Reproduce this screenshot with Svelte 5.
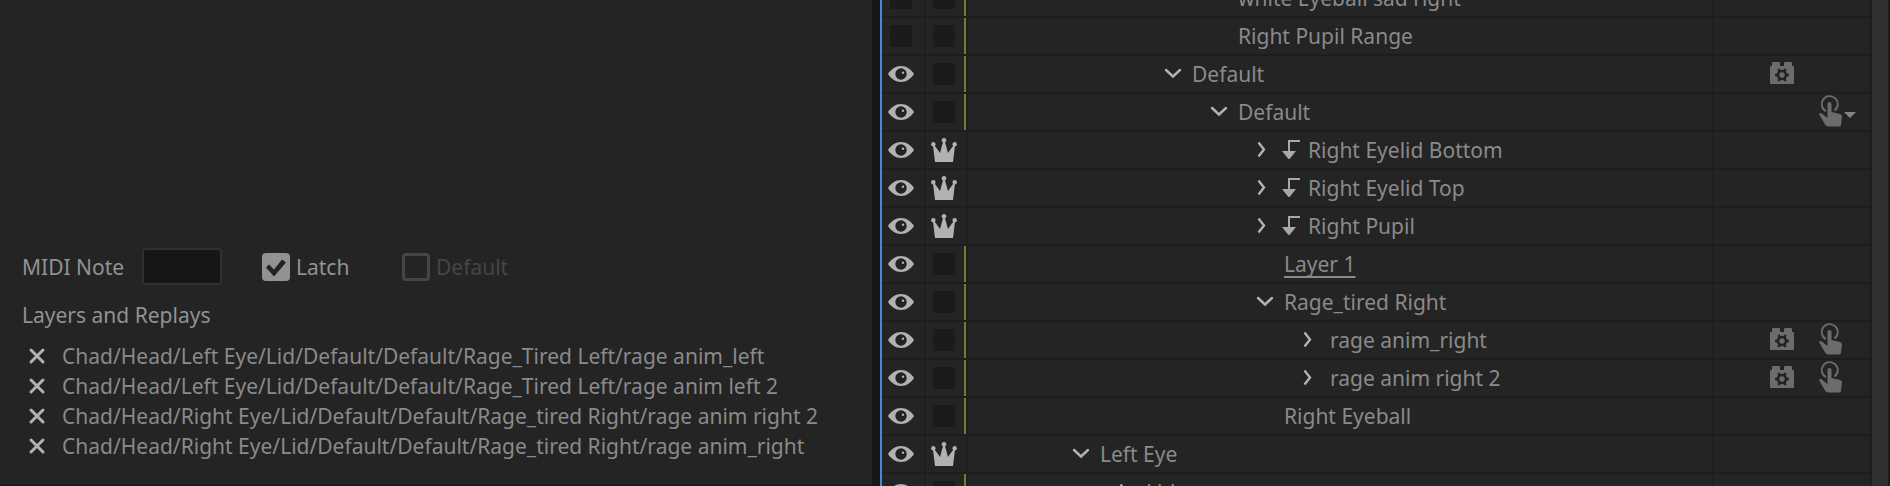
<script lang="ts">
  interface Layer {
    name: string;
    level: number;
    arrow?: 'open' | 'closed';
    hidden?: boolean;
    crown?: boolean;
    attached?: boolean;
    underlined?: boolean;
    behavior?: boolean;
    trigger?: 'single' | 'menu';
  }

  const layers: Layer[] = [
    { name: 'white Eyeball sad right', level: 3, hidden: true },
    { name: 'Right Pupil Range', level: 3, hidden: true },
    { name: 'Default', level: 2, arrow: 'open', behavior: true },
    { name: 'Default', level: 3, arrow: 'open', trigger: 'menu' },
    { name: 'Right Eyelid Bottom', level: 4, arrow: 'closed', crown: true, attached: true },
    { name: 'Right Eyelid Top', level: 4, arrow: 'closed', crown: true, attached: true },
    { name: 'Right Pupil', level: 4, arrow: 'closed', crown: true, attached: true },
    { name: 'Layer 1', level: 4, underlined: true },
    { name: 'Rage_tired Right', level: 4, arrow: 'open' },
    { name: 'rage anim_right', level: 5, arrow: 'closed', behavior: true, trigger: 'single' },
    { name: 'rage anim right 2', level: 5, arrow: 'closed', behavior: true, trigger: 'single' },
    { name: 'Right Eyeball', level: 4 },
    { name: 'Left Eye', level: 0, arrow: 'open', crown: true },
    { name: 'Lid', level: 1, arrow: 'closed' },
  ];

  let replays = $state([
    'Chad/Head/Left Eye/Lid/Default/Default/Rage_Tired Left/rage anim_left',
    'Chad/Head/Left Eye/Lid/Default/Default/Rage_Tired Left/rage anim left 2',
    'Chad/Head/Right Eye/Lid/Default/Default/Rage_tired Right/rage anim right 2',
    'Chad/Head/Right Eye/Lid/Default/Default/Rage_tired Right/rage anim_right',
  ]);

  let midiNote = $state('');
  let latch = $state(true);

  function removeReplay(path: string) {
    replays = replays.filter((r) => r !== path);
  }
</script>

<main class="workspace">
  <section class="triggers">
    <div class="options">
      <label class="midi-label" for="midi">MIDI Note</label>
      <input class="midi" id="midi" type="text" bind:value={midiNote} />
      <label class="check latch">
        <input type="checkbox" bind:checked={latch} />
        <span>Latch</span>
      </label>
      <label class="check disabled">
        <input type="checkbox" disabled />
        <span>Default</span>
      </label>
    </div>

    <h2>Layers and Replays</h2>
    <ul class="replays">
      {#each replays as path (path)}
        <li>
          <button aria-label="Remove" onclick={() => removeReplay(path)}>
            <svg width="16" height="16" viewBox="0 0 16 16">
              <path d="M2 2 14 14M14 2 2 14" fill="none" stroke="currentColor" stroke-width="3" stroke-linecap="round" />
            </svg>
          </button>
          <span>{path}</span>
        </li>
      {/each}
    </ul>
  </section>

  <div class="divider"></div>

  <section class="puppet">
    <ul class="tree">
      {#each layers as layer}
        <li class="row">
          <button class="cell eye" aria-label="Visibility">
            {#if layer.hidden}
              <span class="blank"></span>
            {:else}
              <svg width="26" height="16" viewBox="0 0 26 16">
                <path d="M0 8C3 3.500 7.500 0 13 0s10 3.500 13 8c-3 4.500-7.500 8-13 8S3 12.500 0 8z" fill="currentColor" />
                <circle cx="13" cy="8" r="5.700" fill="#222" />
                <circle cx="15" cy="6.800" r="1.200" fill="currentColor" />
              </svg>
            {/if}
          </button>
          <button class="cell own" class:marked={!layer.crown} aria-label="Independent">
            {#if layer.crown}
              <svg width="26" height="24" viewBox="0 0 26 24" fill="currentColor">
                <path d="M4 24 2 7.500 3.300 7 9 15 12.300 3h1.400L17 15l5.700-8 1.300.5L22 24z" />
                <circle cx="2.300" cy="6.300" r="2.200" />
                <circle cx="13" cy="2.300" r="2.300" />
                <circle cx="23.700" cy="6.300" r="2.200" />
              </svg>
            {:else}
              <span class="blank"></span>
            {/if}
          </button>
          <div class="name" style="--level: {layer.level}">
            <span class="twirl">
              {#if layer.arrow}
                <button aria-label="Expand">
                  <svg width="16" height="16" viewBox="0 0 16 16" fill="none" stroke="currentColor" stroke-width="2.400">
                    {#if layer.arrow === 'open'}
                      <path d="M1 4 8 10.500 15 4" stroke-linecap="round" />
                    {:else}
                      <path d="M1.500 0.500 7 7.500 1.500 14.500" />
                    {/if}
                  </svg>
                </button>
              {/if}
            </span>
            {#if layer.attached}
              <svg class="attach" width="18" height="20" viewBox="0 0 18 20">
                <path d="M18 1H7v12" fill="none" stroke="currentColor" stroke-width="2" />
                <path d="M0 11h14L8 18.500q-1 1-2 0z" fill="currentColor" />
              </svg>
            {/if}
            <span class="label"><span class:underlined={layer.underlined}>{layer.name}</span></span>
          </div>
          <div class="actions">
            <span class="slot">
              {#if layer.behavior}
                <svg width="24" height="22" viewBox="0 0 24 22">
                  <path d="M0 5q0-1 1-1h1V1q0-1 1-1h6q1 0 1 1v3h4V1q0-1 1-1h6q1 0 1 1v3h1q1 0 1 1v16q0 1-1 1H1q-1 0-1-1z" fill="currentColor" />
                  <circle cx="12" cy="13" r="4" fill="none" stroke="#222" stroke-width="2.600" />
                  <path d="M5 13h3M16 13h3M8.500 7l1.500 3M15.500 7 14 10M8.500 19l1.500-3M15.500 19 14 16" stroke="#222" stroke-width="2.600" />
                </svg>
              {/if}
            </span>
            <span class="slot">
              {#if layer.trigger}
                <svg width="24" height="32" viewBox="0 0 24 32">
                  <path d="M7 16.200A8 8 0 1 1 15.500 15.500" fill="none" stroke="currentColor" stroke-width="1.900" />
                  <path d="M8.500 9q0-2 2-2t2 2v8l8.500 2q2 .5 2 2.500l-1 8.500q-.3 1.500-2 1.500H9.500q-2.500 0-3.500-2L.5 20q-1-2 .7-2t2.800 1.500L8.500 23z" fill="currentColor" />
                </svg>
              {/if}
            </span>
            {#if layer.trigger === 'menu'}
              <svg class="caret" width="12" height="6" viewBox="0 0 12 6">
                <path d="M0 0h12L6 6z" fill="currentColor" />
              </svg>
            {/if}
          </div>
        </li>
      {/each}
    </ul>
    <div class="scrollbar"></div>
  </section>
</main>

<style>
  :global(body) {
    background: #242424;
  }

  .workspace {
    display: grid;
    grid-template-columns: 872fr 8px 1010fr;
    grid-template-rows: minmax(0, 1fr);
    height: 100vh;
    overflow: hidden;
    background: #242424;
    color: #8a8a8a;
    font-family: 'Noto Sans', sans-serif;
    font-size: 21px;
    line-height: 30px;
  }

  ul {
    list-style: none;
    margin: 0;
    padding: 0;
  }

  button {
    display: flex;
    align-items: center;
    padding: 0;
    border: 0;
    background: none;
    color: #b2b2b2;
  }

  svg {
    display: block;
    flex: none;
    overflow: visible;
  }

  .triggers {
    display: flex;
    flex-direction: column;
    justify-content: flex-end;
    padding: 0 22px 23px;
    border-bottom: 2px solid #1b1b1b;
    min-width: 0;
    white-space: nowrap;
  }

  .options {
    display: flex;
    align-items: center;
    color: #929292;
  }

  .midi-label {
    width: 120px;
  }

  .midi {
    box-sizing: border-box;
    width: 80px;
    height: 37px;
    padding: 0 8px;
    border: 2px solid #303030;
    border-radius: 4px;
    background: #161616;
    color: inherit;
    font: inherit;
  }

  .check {
    display: flex;
    align-items: center;
    gap: 6px;
    margin-left: 40px;
  }

  .latch {
    width: 100px;
  }

  .check input {
    appearance: none;
    box-sizing: border-box;
    width: 28px;
    height: 28px;
    margin: 0;
    border: 3px solid #464646;
    border-radius: 4px;
  }

  .check input:checked {
    border: 0;
    background: #929292;
  }

  .check input:checked::before {
    content: '';
    display: block;
    height: 28px;
    background: #222;
    clip-path: polygon(4px 15px, 7px 12px, 12px 17px, 20px 7px, 24px 10px, 12px 24px);
  }

  .disabled {
    color: #464646;
  }

  h2 {
    margin: 15px 0 11px;
    color: #929292;
    font-size: inherit;
    font-weight: 400;
  }

  .replays li {
    display: flex;
    align-items: center;
    gap: 17px;
    padding-left: 7px;
  }

  .divider {
    background: #171717;
  }

  .puppet {
    display: flex;
    min-width: 0;
    border-left: 2px solid #4d86d8;
    border-right: 2px solid #1b1b1b;
  }

  /* the list is scrolled part way into its first row */
  .tree {
    flex: 1;
    margin-top: -20px;
    border-right: 2px solid #1d1d1d;
  }

  .row {
    display: flex;
    box-sizing: border-box;
    height: 38px;
    border-bottom: 2px solid #1d1d1d;
  }

  .cell {
    box-sizing: border-box;
    flex: none;
    justify-content: center;
    padding-right: 4px;
    border-right: 2px solid #1f1f1f;
  }

  .eye {
    width: 44px;
  }

  .own {
    width: 42px;
  }

  .marked {
    box-shadow: inset -2px 0 #7c7a30;
  }

  .blank {
    width: 22px;
    height: 22px;
    background: #1b1b1b;
  }

  .name {
    display: flex;
    flex: 1;
    align-items: center;
    padding-left: calc(105px + var(--level) * 46px);
    border-right: 2px solid #1f1f1f;
    white-space: nowrap;
  }

  .twirl {
    width: 25px;
  }

  .attach {
    margin-right: 6px;
    color: #a8a8a8;
  }

  .label {
    padding-left: 2px;
  }

  .underlined {
    text-decoration: underline 2px;
    text-decoration-skip-ink: none;
    text-underline-offset: 4px;
  }

  .actions {
    display: flex;
    box-sizing: border-box;
    width: 156px;
    align-items: center;
    padding: 0 0 2px 56px;
    color: #6c6c6c;
  }

  .slot {
    width: 49px;
  }

  .caret {
    margin: 8px 0 0 -24px;
    color: #858585;
  }

  .scrollbar {
    width: 16px;
    background: #303030;
  }
</style>
